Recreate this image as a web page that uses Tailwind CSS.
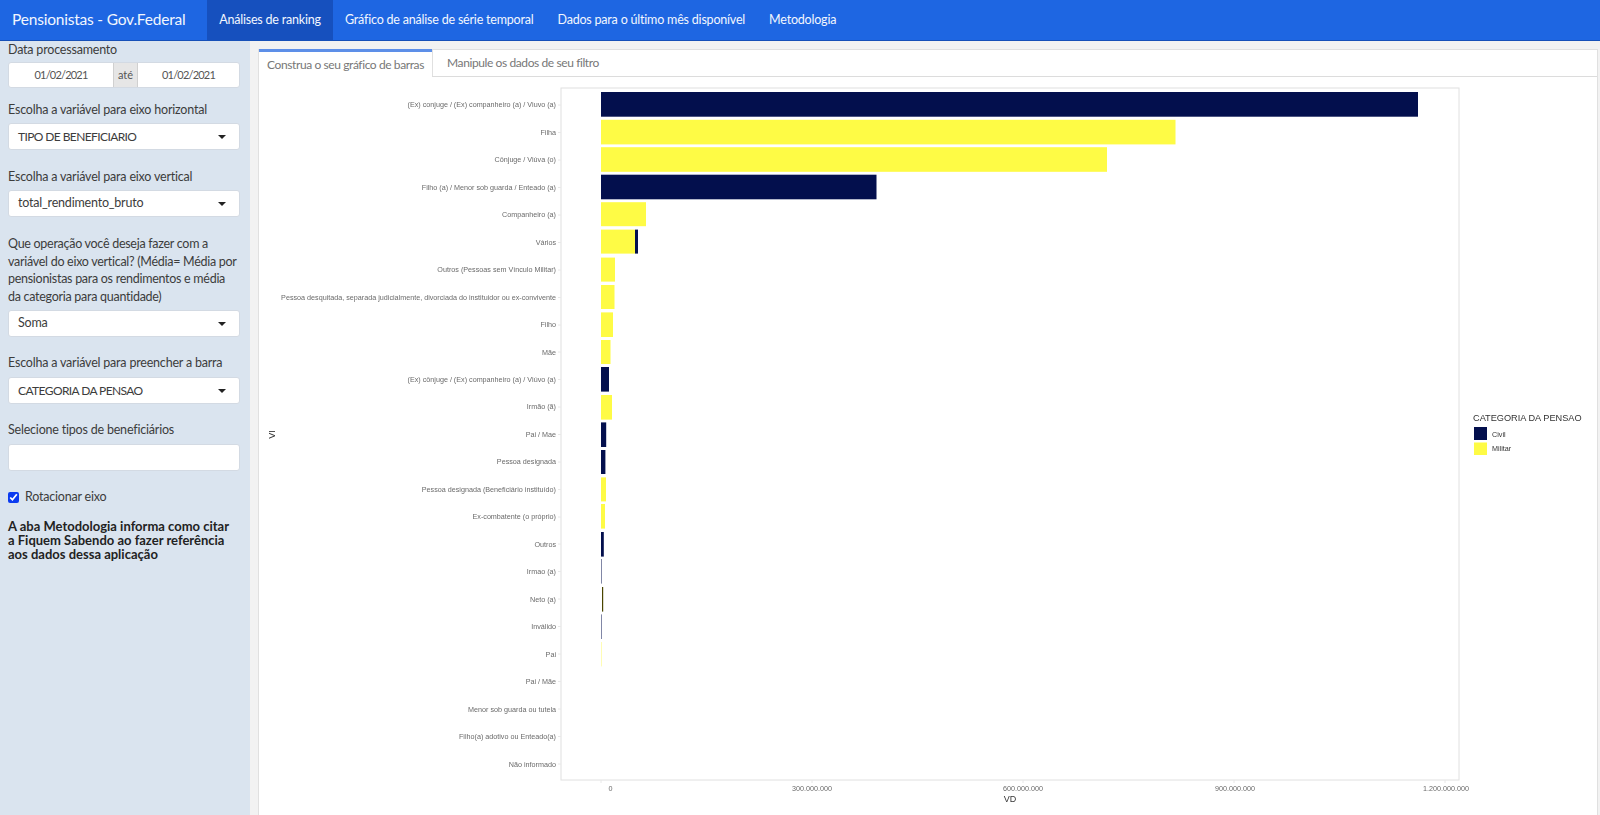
<!DOCTYPE html>
<html lang="pt">
<head>
<meta charset="utf-8">
<title>Pensionistas - Gov.Federal</title>
<script src="https://cdn.jsdelivr.net/npm/@tailwindcss/browser@4"></script>
</head>
<body class="h-[815px] w-[1600px] overflow-hidden bg-[#f2f2f2] font-['Lato','Noto_Sans',sans-serif] text-[12.5px] tracking-[-0.2px] text-[#3c3c3c]">
<nav class="flex h-[41px] items-stretch border-b border-[#1650b8] bg-[#1e66e2] text-[#f2f6fe]">
  <div class="flex w-[207px] items-center whitespace-nowrap pl-3 text-[15.5px] tracking-[-0.2px]">Pensionistas - Gov.Federal</div>
  <a class="flex w-[126px] items-center justify-center bg-[#1650be]">Análises de ranking</a>
  <a class="flex items-center px-3">Gráfico de análise de série temporal</a>
  <a class="flex items-center px-3">Dados para o último mês disponível</a>
  <a class="flex items-center px-3">Metodologia</a>
</nav>
<div class="flex h-[774px]">
  <aside class="w-[250px] shrink-0 bg-[#dae4ef] pl-2 pr-[10px]">
    <label class="block h-[18px] leading-[18px]">Data processamento</label>
    <div class="mt-[3px] flex h-[26px] overflow-hidden rounded-[3px] border border-[#d3dae3] bg-white text-[11px] tracking-[-0.8px] text-[#555]">
      <span class="flex w-[104px] items-center justify-center">01/02/2021</span>
      <span class="flex w-[25px] items-center justify-center border-x border-[#d0d0d0] bg-[#e6e6e6] tracking-normal">até</span>
      <span class="flex flex-1 items-center justify-center">01/02/2021</span>
    </div>
    <label class="mt-[12px] block h-[20px] leading-[20px]">Escolha a variável para eixo horizontal</label>
    <div class="mt-[3px] flex h-[27px] items-center justify-between rounded-[3px] border border-[#d3dae3] bg-white pl-[9px] pr-[13px] text-[12px] tracking-[-0.6px]">TIPO DE BENEFICIARIO<span class="h-0 w-0 border-x-[4px] border-t-[4px] border-x-transparent border-t-[#222]"></span></div>
    <label class="mt-[17px] block h-[20px] leading-[20px]">Escolha a variável para eixo vertical</label>
    <div class="mt-[3px] flex h-[27px] items-center justify-between rounded-[3px] border border-[#d3dae3] bg-white pl-[9px] pr-[13px]">total_rendimento_bruto<span class="h-0 w-0 border-x-[4px] border-t-[4px] border-x-transparent border-t-[#222]"></span></div>
    <label class="mt-[18px] block leading-[17.5px] tracking-[-0.28px]">Que operação você deseja fazer com a variável do eixo vertical? (Média= Média por pensionistas para os rendimentos e média da categoria para quantidade)</label>
    <div class="mt-[5px] flex h-[27px] items-center justify-between rounded-[3px] border border-[#d3dae3] bg-white pl-[9px] pr-[13px]">Soma<span class="h-0 w-0 border-x-[4px] border-t-[4px] border-x-transparent border-t-[#222]"></span></div>
    <label class="mt-[16px] block h-[20px] leading-[20px]">Escolha a variável para preencher a barra</label>
    <div class="mt-[4px] flex h-[27px] items-center justify-between rounded-[3px] border border-[#d3dae3] bg-white pl-[9px] pr-[13px] text-[12px] tracking-[-0.6px]">CATEGORIA DA PENSAO<span class="h-0 w-0 border-x-[4px] border-t-[4px] border-x-transparent border-t-[#222]"></span></div>
    <label class="mt-[16px] block h-[20px] leading-[20px]">Selecione tipos de beneficiários</label>
    <div class="mt-[4px] h-[27px] rounded-[3px] border border-[#d3dae3] bg-white"></div>
    <label class="mt-[16px] flex h-5 items-center gap-[6px]"><input type="checkbox" checked class="h-[11px] w-[11px] accent-[#0b3bf0]">Rotacionar eixo</label>
    <p class="mt-[12px] pr-[4px] text-[13px] font-bold leading-[14.2px] tracking-normal text-[#222]">A aba Metodologia informa como citar a Fiquem Sabendo ao fazer referência aos dados dessa aplicação</p>
  </aside>
  <main class="flex-1 pl-2 pr-[2px] pt-[8px]">
    <div class="h-full border-x border-[#e0e0e0] bg-white">
      <div class="flex h-[28px] border-b border-[#dcdcdc] bg-white text-[12px] tracking-[-0.4px] text-[#777]">
        <div class="flex h-[28px] w-[173px] items-center justify-center whitespace-nowrap border-t-[3px] border-[#5d8fe8] bg-white">Construa o seu gráfico de barras</div>
        <div class="flex flex-1 items-center border-l border-t border-[#e0e0e0] pl-[14px]">Manipule os dados de seu filtro</div>
      </div>
      <svg width="1338" height="738" viewBox="259 77 1338 738" class="block font-['Liberation_Sans',sans-serif] tracking-normal will-change-transform">
        <rect x="561" y="88" width="898" height="692" fill="#fff" stroke="#e0e0e0"/>
        <g fill="#6a6a6a" font-size="7.2" text-anchor="end" transform="translate(0 -0.5)">
          <text x="556" y="107.5">(Ex) conjuge / (Ex) companheiro (a) / Viuvo (a)</text>
          <text x="556" y="135">Filha</text>
          <text x="556" y="162.5">Cônjuge / Viúva (o)</text>
          <text x="556" y="190">Filho (a) / Menor sob guarda / Enteado (a)</text>
          <text x="556" y="217.5">Companheiro (a)</text>
          <text x="556" y="245">Vários</text>
          <text x="556" y="272.5">Outros (Pessoas sem Vínculo Militar)</text>
          <text x="556" y="300">Pessoa desquitada, separada judicialmente, divorciada do instituidor ou ex-convivente</text>
          <text x="556" y="327.5">Filho</text>
          <text x="556" y="355">Mãe</text>
          <text x="556" y="382.5">(Ex) cônjuge / (Ex) companheiro (a) / Viúvo (a)</text>
          <text x="556" y="409.5">Irmão (ã)</text>
          <text x="556" y="437">Pai / Mae</text>
          <text x="556" y="464.5">Pessoa designada</text>
          <text x="556" y="492">Pessoa designada (Beneficiário instituído)</text>
          <text x="556" y="519.5">Ex-combatente (o próprio)</text>
          <text x="556" y="547">Outros</text>
          <text x="556" y="574.5">Irmao (a)</text>
          <text x="556" y="602">Neto (a)</text>
          <text x="556" y="629.5">Inválido</text>
          <text x="556" y="657">Pai</text>
          <text x="556" y="684.5">Pai / Mãe</text>
          <text x="556" y="712">Menor sob guarda ou tutela</text>
          <text x="556" y="739.5">Filho(a) adotivo ou Enteado(a)</text>
          <text x="556" y="767">Não informado</text>
        </g>
        <g stroke="#e8e8e8">
          <path d="M558 105h3M558 132.5h3M558 160h3M558 187.5h3M558 215h3M558 242.5h3M558 270h3M558 297.5h3M558 325h3M558 352h3M558 379.5h3M558 407h3M558 434.5h3M558 462h3M558 489.5h3M558 517h3M558 544h3M558 571.5h3M558 599h3M558 626.5h3M558 654h3M558 681.5h3M558 709h3M558 736.5h3M558 764h3"/>
          <path d="M601 780v3M812 780v3M1023 780v3M1234 780v3M1445 780v3"/>
        </g>
        <g fill="#fefb45">
          <rect x="601" y="119.8" width="574.5" height="24.6"/>
          <rect x="601" y="147.2" width="506" height="24.6"/>
          <rect x="601" y="202.2" width="45" height="24"/>
          <rect x="601" y="229.6" width="34" height="24"/>
          <rect x="601" y="257.6" width="14" height="24"/>
          <rect x="601" y="285" width="13.5" height="24"/>
          <rect x="601" y="312.4" width="12" height="24.6"/>
          <rect x="601" y="340" width="9.5" height="24"/>
          <rect x="601" y="395" width="11" height="24.6"/>
          <rect x="601" y="477.4" width="5" height="24"/>
          <rect x="601" y="504" width="4" height="24.6"/>
          <rect x="601" y="642" width="1" height="24.4" opacity=".4"/>
        </g>
        <g fill="#030f4d">
          <rect x="601" y="92" width="817" height="24.7"/>
          <rect x="601" y="174.7" width="275.5" height="24.6"/>
          <rect x="635" y="229.6" width="3" height="24"/>
          <rect x="601" y="367" width="8" height="24.6"/>
          <rect x="601" y="422.4" width="5.2" height="24.6"/>
          <rect x="601" y="450" width="4.4" height="24"/>
          <rect x="601" y="532" width="2.8" height="24.6"/>
          <rect x="601" y="559" width="1" height="24.6" opacity=".5"/>
          <rect x="602" y="587" width="1.2" height="24.6" fill="#4a4500"/>
          <rect x="601" y="614.4" width="1" height="24.6" opacity=".5"/>
        </g>
        <g fill="#6a6a6a" font-size="7.2" text-anchor="middle">
          <text x="610.5" y="790.5">0</text>
          <text x="812" y="790.5">300.000.000</text>
          <text x="1023" y="790.5">600.000.000</text>
          <text x="1235" y="790.5">900.000.000</text>
          <text x="1446" y="790.5">1.200.000.000</text>
        </g>
        <text x="1010" y="802" fill="#333" font-size="9" text-anchor="middle">VD</text>
        <text transform="translate(275 434.5) rotate(-90)" fill="#333" font-size="9" text-anchor="middle">VI</text>
        <text x="1473" y="421" fill="#333" font-size="9.2">CATEGORIA DA PENSAO</text>
        <rect x="1474" y="427" width="13" height="13" fill="#030f4d"/>
        <rect x="1474" y="442.5" width="13" height="12.5" fill="#fefb45"/>
        <g fill="#333" font-size="7.2">
          <text x="1492" y="437">Civil</text>
          <text x="1492" y="451">Militar</text>
        </g>
      </svg>
    </div>
  </main>
</div>
</body>
</html>
